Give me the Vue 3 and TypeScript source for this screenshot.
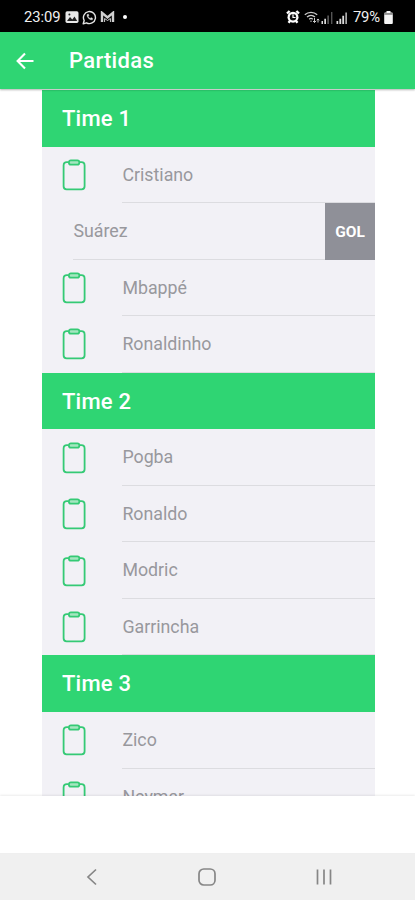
<script setup lang="ts">
interface Player {
  name: string
  swiped?: boolean
}
interface Team {
  title: string
  players: Player[]
}

const teams: Team[] = [
  {
    title: 'Time 1',
    players: [{ name: 'Cristiano' }, { name: 'Suárez', swiped: true }, { name: 'Mbappé' }, { name: 'Ronaldinho' }],
  },
  {
    title: 'Time 2',
    players: [{ name: 'Pogba' }, { name: 'Ronaldo' }, { name: 'Modric' }, { name: 'Garrincha' }],
  },
  {
    title: 'Time 3',
    players: [{ name: 'Zico' }, { name: 'Neymar' }],
  },
]
</script>

<template>
  <div class="screen">
    <div class="status">
      <span class="clock">23:09</span>
      <svg class="ic-photo" width="14" height="14" viewBox="0 0 14 14">
        <rect x="0.5" y="1.3" width="13" height="11.6" rx="1.6" fill="#e8e8e8" />
        <path d="M2 11l3-4 2.3 2.4L9.5 6.5 12.2 11z" fill="#222" />
        <circle cx="4.4" cy="4.4" r="1" fill="#222" />
      </svg>
      <svg class="ic-chat" width="15" height="15" viewBox="0 0 15 15" fill="none" stroke="#e4e4e4">
        <path d="M1.2 13.8l1-3.3a6 6 0 1 1 2.3 2.3z" stroke-width="1.4" stroke-linejoin="round" />
        <path d="M5.2 4.5c-.9 2.3 2.6 6 5.2 5.2l.3-1.3-1.6-.8-.9.8C7 7.9 6.3 7 6.2 6.3l.7-.8-.6-1.4z" fill="#e4e4e4" stroke-width=".4" />
      </svg>
      <svg class="ic-mail" width="15" height="12" viewBox="0 0 15 12" fill="none" stroke="#cfcfcf">
        <path d="M2 11V1.8l5.5 4.7L13 1.8V11" stroke-width="2.4" />
        <path d="M4.6 11V7.5l2.9 2 2.9-2V11" stroke-width="1" />
      </svg>
      <i class="dot"></i>
      <span class="gap"></span>
      <svg class="ic-alarm" width="14" height="14" viewBox="0 0 14 14">
        <path d="M1 3.5L3.6 1M13 3.5L10.4 1M2.5 12.8l1.5-1.8M11.5 12.8L10 11" stroke="#fff" stroke-width="2.4" />
        <circle cx="7" cy="7.2" r="5.5" fill="#fff" />
        <circle cx="7" cy="7.2" r="3.2" fill="#111" />
        <path d="M7 4.2v3.300h2.600" fill="none" stroke="#fff" stroke-width="1.200" />
      </svg>
      <svg class="ic-wifi" width="16" height="14" viewBox="0 0 16 14" fill="none" stroke="#ccc" stroke-width="1.3">
        <path d="M.8 4.8a9 9 0 0 1 12.4 0M3 7a6 6 0 0 1 8 0M5.2 9.2a2.8 2.8 0 0 1 3.6 0" />
        <path d="M7 10.5v1.5M10.5 8v4.5M9 11l1.5 1.5L12 11M14 12.5V9M12.7 10.2L14 9l1.3 1.2" stroke-width="1" />
      </svg>
      <svg class="ic-sig" width="12" height="13" viewBox="0 0 12 13">
        <path d="M.5 10h1.500v3H.5zM3.300 7.800h1.700V13H3.300z" fill="#ddd" />
        <path d="M6.300 4.500h1.700V13H6.300zM10 1h1.400v12H10z" fill="#555" />
      </svg>
      <svg class="ic-sig2" width="12" height="13" viewBox="0 0 12 13">
        <path d="M.5 10h1.700v3H.5zM3.400 7.800h1.800V13H3.400zM6.300 4.800h1.800V13H6.300z" fill="#ddd" />
        <path d="M9.300 1.500H11V13H9.300z" fill="#aaa" />
      </svg>
      <span class="percent">79%</span>
      <svg class="ic-batt" width="9" height="13" viewBox="0 0 9 13">
        <path d="M2.500 0h4v1.500h1.300q1 0 1 1V12q0 1-1 1H1.200q-1 0-1-1V2.500q0-1 1-1h1.300z" fill="#f4f4f4" />
        <path d="M.2 2.300h8.600v1.300H.2z" fill="#666" />
      </svg>
    </div>

    <header class="toolbar">
      <svg width="19" height="18" viewBox="0 0 19 18" fill="none" stroke="#fff" stroke-width="2.100">
        <path d="M17.500 9H2M9 1.500L1.600 9 9 16.500" />
      </svg>
      <h1>Partidas</h1>
    </header>

    <main class="content">
      <section v-for="team in teams" :key="team.title">
        <h2>{{ team.title }}</h2>
        <div v-for="p in team.players" :key="p.name" class="row" :class="{ swiped: p.swiped }">
          <svg v-if="!p.swiped" class="clip" width="24" height="32" viewBox="0 0 24 32" fill="none" stroke="#35ca75" stroke-width="1.800">
            <path d="M6.500 3.200H4.800Q1.600 3.200 1.600 6.400V27.300Q1.600 30.300 4.600 30.300H19.600Q22.600 30.300 22.600 27.300V6.400Q22.600 3.200 19.400 3.200H17.700" />
            <rect x="6.900" y="1.400" width="10.400" height="4.300" rx="1.900" fill="#a5e6c0" />
          </svg>
          <div class="label">{{ p.name }}</div>
          <button v-if="p.swiped" class="goal">GOL</button>
        </div>
      </section>
    </main>

    <footer class="tabbar"></footer>

    <nav class="sysnav">
      <svg width="12" height="18" viewBox="0 0 12 18"><path d="M10 1.500L2 9l8 7.500" /></svg>
      <svg width="18" height="18" viewBox="0 0 18 18"><rect x="1" y="1" width="16" height="16" rx="4.800" /></svg>
      <svg width="16" height="18" viewBox="0 0 16 18"><path d="M1.500 1.500v15M8 1.500v15M14.500 1.500v15" /></svg>
    </nav>
  </div>
</template>

<style>
body {
  margin: 0;
  background: #fff;
}
</style>

<style scoped>
.screen {
  width: 415px;
  height: 900px;
  display: flex;
  flex-direction: column;
  overflow: hidden;
  background: #fff;
  font-family: Roboto, 'Liberation Sans', sans-serif;
}
.status {
  flex: none;
  height: 32px;
  box-sizing: border-box;
  padding: 2px 22px 0 24px;
  display: flex;
  align-items: center;
  background: #000;
  color: #f0f0f0;
  font-size: 14.8px;
}
.clock {
  width: 37px;
  letter-spacing: -0.1px;
  margin-right: 4px;
}
.ic-chat,
.ic-mail {
  margin-left: 3px;
}
.dot {
  width: 4px;
  height: 4px;
  border-radius: 50%;
  background: #fff;
  margin-left: 8px;
}
.gap {
  flex: 1;
}
.ic-wifi {
  margin-left: 4px;
}
.ic-sig {
  margin-left: 1px;
}
.ic-sig2 {
  margin-left: 3px;
}
.percent {
  width: 30px;
  margin-left: 5px;
  letter-spacing: -0.2px;
}
.ic-batt {
  margin-left: 1px;
}
.toolbar {
  flex: none;
  position: relative;
  z-index: 1;
  height: 57px;
  box-sizing: border-box;
  padding-left: 16px;
  display: flex;
  align-items: center;
  background: #2fd573;
  color: #fff;
  box-shadow: 0 1px 2px rgba(0, 0, 0, 0.3);
}
.toolbar h1 {
  margin: 0 0 0 34px;
  font-size: 22px;
  line-height: 28px;
  font-weight: 500;
  letter-spacing: 0.3px;
}
.content {
  flex: none;
  height: 707px;
  box-sizing: border-box;
  padding: 1px 40px 0 42px;
  overflow: hidden;
}
h2 {
  margin: 0;
  height: 56.56px;
  box-sizing: border-box;
  padding-left: 20px;
  font-size: 22px;
  line-height: 57.5px;
  font-weight: 500;
  letter-spacing: 0.2px;
  color: #fff;
  background: #2fd573;
}
.row {
  height: 56.56px;
  box-sizing: border-box;
  padding-left: 20px;
  display: flex;
  align-items: center;
  background: #f2f1f6;
}
.clip {
  flex: none;
  margin-right: 36px;
}
.label {
  flex: 1;
  align-self: stretch;
  border-bottom: 1px solid #dcdce0;
  text-indent: 0.4px;
  font-size: 17.8px;
  line-height: 55.5px;
  color: #98989d;
}
.swiped {
  padding-left: 31px;
}
.goal {
  align-self: stretch;
  width: 50px;
  border: 0;
  padding: 1px 0 0;
  background: #8f9098;
  color: #fff;
  font-family: inherit;
  font-size: 15.5px;
  font-weight: 700;
}
.tabbar {
  flex: none;
  height: 57px;
  background: #fff;
  box-shadow: 0 -1px 2px rgba(0, 0, 0, 0.08);
  z-index: 1;
}
.sysnav {
  flex: none;
  height: 47px;
  box-sizing: border-box;
  padding: 0 83px 0 86px;
  display: flex;
  align-items: center;
  justify-content: space-between;
  background: #f0f0f0;
}
.sysnav svg {
  fill: none;
  stroke: #868686;
  stroke-width: 1.7;
}
</style>
